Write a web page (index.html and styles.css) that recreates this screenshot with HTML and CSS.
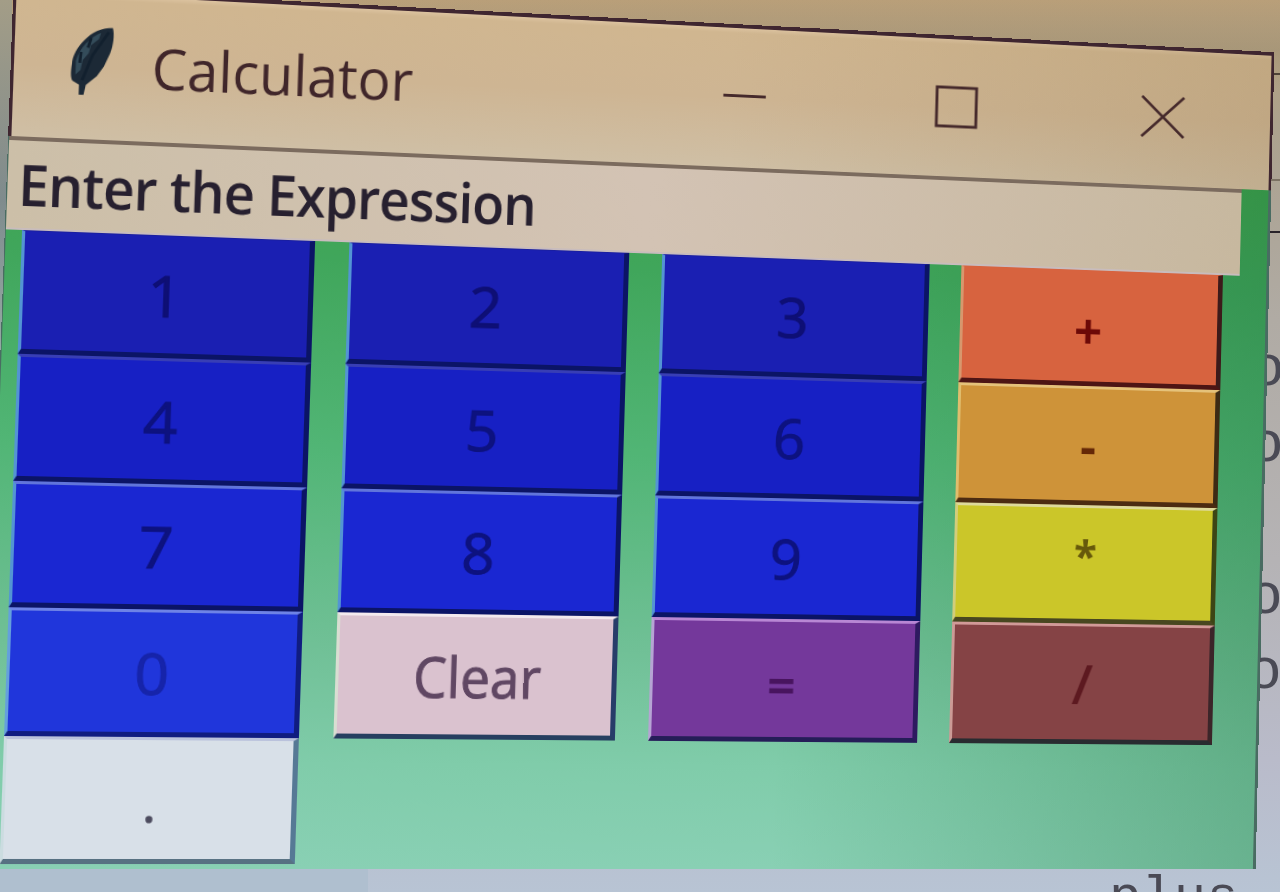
FILE: index.html
```html
<!DOCTYPE html>
<html lang="en">
<head>
<meta charset="utf-8">
<title>Calculator</title>
<link rel="stylesheet" href="styles.css">
</head>
<body>
<main class="desktop">
  <div class="strip"></div>
  <div class="rule rule-a"></div>
  <div class="rule rule-b"></div>
  <div class="rule rule-c"></div>
  <div class="footer-shade"></div>
  <span class="code c1">o</span>
  <span class="code c2">o</span>
  <span class="code c3">o</span>
  <span class="code c4">o</span>
  <span class="code c5">plus</span>

  <section class="window">
    <header class="titlebar">
      <svg class="feather" viewBox="0 0 44 76">
        <path d="M42 0 C30 0 20 6 13 15 C6 23 1 33 1 42 C0 50 0 57 2 60 L9 64 L9 75 L14 75 L16 64 L27 54 L34 43 L40 28 C43 19 44 8 42 0Z" fill="#1c2936"/>
        <path d="M30 6 C20 10 8 24 5 38 L5 53 L10 48 L12 37 L18 29 L20 20 L28 13Z" fill="#344c5a"/>
        <path d="M38 5 L22 31 L12 59 M20 12 L17 23 M10 28 L9 40" fill="none" stroke="#12202e" stroke-width="3"/>
      </svg>
      <h1 class="title"><span class="title-text">Calculator</span></h1>
      <div class="controls">
        <svg class="ctl" viewBox="0 0 48 48"><path d="M2 23H46"/></svg>
        <svg class="ctl" viewBox="0 0 48 48"><path d="M3 3H45V45H3Z"/></svg>
        <svg class="ctl" viewBox="0 0 48 48"><path d="M1 2L47 46M47 2L1 46"/></svg>
      </div>
    </header>
    <div class="client">
      <div class="entry"><span class="entry-text">Enter the Expression</span></div>
      <div class="keys">
        <button class="key blue r1">1</button>
        <button class="key blue r1">2</button>
        <button class="key blue r1">3</button>
        <button class="key plus">+</button>
        <button class="key blue r2">4</button>
        <button class="key blue r2">5</button>
        <button class="key blue r2">6</button>
        <button class="key minus">-</button>
        <button class="key blue r3">7</button>
        <button class="key blue r3">8</button>
        <button class="key blue r3">9</button>
        <button class="key times">*</button>
        <button class="key blue r4">0</button>
        <button class="key clear"><span class="narrow">Clear</span></button>
        <button class="key equals">=</button>
        <button class="key divide">/</button>
        <button class="key dot">.</button>
      </div>
    </div>
  </section>
</main>
</body>
</html>
```
FILE: styles.css
```css
* { box-sizing: border-box; }

body { margin: 0; overflow: hidden; }

.desktop {
  position: relative;
  width: 1280px;
  height: 892px;
  overflow: hidden;
  background:
    linear-gradient(to bottom, rgba(160, 145, 115, 0) 0, rgba(160, 145, 115, .6) 50px, rgba(160, 145, 115, 0) 90px),
    linear-gradient(to bottom, #b99f79 0, #aba18e 130px, #b0aba4 320px, #b5b3b5 560px, #b9bbca 760px, #b8c4d4 892px);
  font-family: "Open Sans", "Noto Sans", sans-serif;
}

/* Whatever is open behind the calculator */
.strip {
  position: absolute;
  left: 0;
  top: 0;
  width: 12px;
  height: 892px;
  background: linear-gradient(to bottom, #a39d87, #7f8b8d 200px, #a9c8ba 500px, #b0c4cc);
}
.rule { position: absolute; right: 0; width: 22px; height: 2px; background: #7c7263; }
.rule-a { top: 73px; background: #4e4237; }
.rule-b { top: 179px; }
.rule-c { top: 231px; background: #28232a; }
.footer-shade {
  position: absolute;
  left: 0;
  top: 860px;
  width: 368px;
  height: 32px;
  background: #afbfcf;
}
.code {
  position: absolute;
  color: #4a4a55;
  font: 58px/60px "Liberation Mono", monospace;
}
.c1 { left: 1250px; top: 340px; }
.c2 { left: 1249px; top: 416px; }
.c3 { left: 1248px; top: 568px; }
.c4 { left: 1247px; top: 643px; }
.c5 { left: 1109px; top: 869px; font-size: 54px; }

/* The window is seen at a slight angle; the origin is the keypad's corner */
.window {
  position: absolute;
  left: -16px;
  top: -244px;
  width: 1267px;
  height: 874px;
  transform-origin: 16px 244px;
  transform: matrix3d(
    1.078267, .0552408, 0, .0000640475,
    -.03604, 1.002484, 0, -.000010198,
    0, 0, 1, 0,
    22, 232, 0, 1);
  display: flex;
  flex-direction: column;
}

.titlebar {
  flex: 0 0 149px;
  display: flex;
  align-items: flex-start;
  border: solid #3f2630;
  border-width: 4px 3px 0;
  background:
    linear-gradient(to right, rgba(160, 135, 95, 0) 55%, rgba(160, 135, 95, .3)),
    linear-gradient(to bottom, #dcc3a0 0, #d0b690 5px, #ceb593 50%, #cfbfa5);
}
.feather { flex: none; width: 40px; height: 78px; margin: 28px 0 0 53px; }
.title {
  margin: 31px 0 0 36px;
  width: 300px;
  color: #40262a;
  font-size: 57px;
  line-height: 78px;
  font-weight: 400;
  white-space: nowrap;
}
.title-text { display: inline-block; transform-origin: left; transform: scaleX(.935); }
.controls { display: flex; gap: 171px; margin: 48px 0 0 257px; }
.ctl { flex: none; width: 47px; height: 47px; fill: none; stroke: #45292b; stroke-width: 3; }

.client {
  flex: 1;
  border: solid #496c62;
  border-width: 0 3px 0 1px;
  background:
    linear-gradient(to right, rgba(30, 110, 60, 0) 60%, rgba(30, 110, 60, .3)),
    linear-gradient(to bottom, #3fa34c 0, #40a65b 110px, #51b575 300px, #70c096 500px, #80ccaa 620px, #89d0b4);
}
.entry {
  width: 1234px;
  height: 93px;
  padding-left: 10px;
  border-top: 4px solid #7b6b5e;
  border-bottom: 2px solid #c8bcbd;
  background: linear-gradient(to right, #ccbfa8, #d3c3b4 50%, #c7b89f);
}
.entry-text {
  display: inline-block;
  color: #27202f;
  font-size: 57px;
  line-height: 87px;
  font-weight: 600;
  letter-spacing: -1px;
  white-space: nowrap;
  transform-origin: left;
  transform: scaleX(.905);
}

.keys {
  display: grid;
  grid-template-columns: 277px 275px 273px 277px;
  grid-template-rows: 123px 126px 125px 127px 126px;
  column-gap: 33px;
  margin-left: 15px;
}
.key {
  margin: 0;
  padding: 2px 0 0;
  border: solid;
  border-width: 3px 5px 5px 3px;
  font: 500 57px/1 "Open Sans", "Noto Sans", sans-serif;
}
.blue { border-color: #4a5fce #0b1466 #0b1466 #5394d4; color: #0d127f; padding-right: 4px; -webkit-text-stroke: 1px; }
.r1 { background: #1a1fb2; border-top-width: 1px; border-top-color: #1a1fa0; color: #0e0f75; }
.r2 { background: #1720c4; border-top-color: #383eb5; }
.r3 { background: #1a27d2; border-top-color: #6175db; }
.r4 { background: #2036db; border-color: #6e83e6 #101c80 #101c80 #64a0dc; color: #1624aa; }
.plus { background: #d7633f; border-color: #d7633f #3c1a1a #4d1514 #d7976d; border-top-width: 1px; padding: 9px 6px 0 0; color: #6c0907; font-size: 52px; font-weight: 700; }
.minus { background: #ce9339; border-color: #e5c27a #3d2a14 #4c2b11 #e0bd6d; color: #642807; font-size: 52px; font-weight: 700; }
.times { background: #cbc629; border-color: #ded99b #3d4515 #484720 #d2cd7b; padding: 0 0 18px; color: #66590b; font-size: 44px; font-weight: 700; }
.divide { background: #854345; border-color: #d19a98 #3b2529 #292b30 #cc9b96; color: #5d1920; font-weight: 600; }
.clear { background: #dac2cf; border-color: #f3e9ee #273d69 #263f60 #d9ded2; padding-left: 3px; color: #604763; -webkit-text-stroke: 1px; }
.narrow { display: inline-block; transform: scaleX(.91); }
.equals { background: #74389b; border-color: #b887d4 #2e1a60 #251d58 #b6a4d4; padding: 11px 6px 0 0; color: #48145f; font-weight: 700; font-size: 50px; }
.dot { background: #d8e0e8; border-color: #bac2dc #567995 #577182 #cbdce0; color: #4c4b5e; }
```
